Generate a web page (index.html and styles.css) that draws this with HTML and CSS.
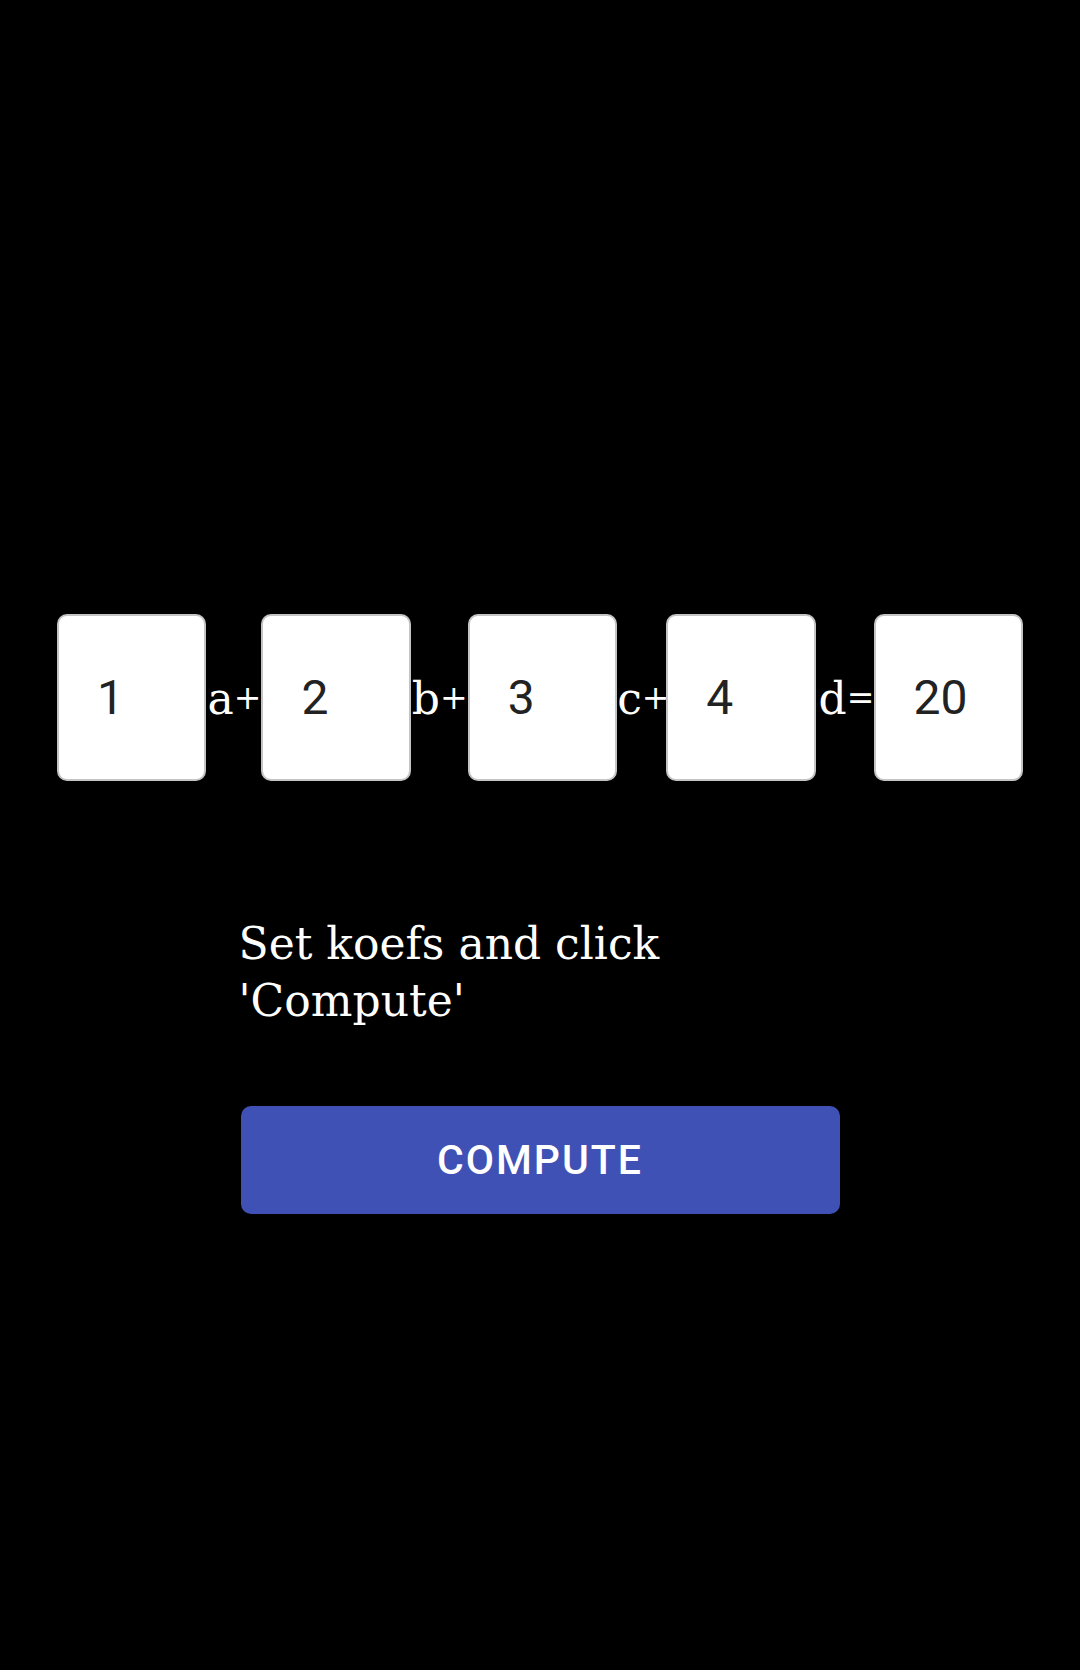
FILE: index.html
```html
<!DOCTYPE html>
<html>
<head>
<meta charset="utf-8">
<link rel="stylesheet" href="styles.css">
</head>
<body>
<main class="screen">
  <div class="equation">
    <div class="koef">1</div><span class="op op-a">a<span class="sign">+</span></span>
    <div class="koef">2</div><span class="op op-b">b<span class="sign">+</span></span>
    <div class="koef">3</div><span class="op op-c">c<span class="sign">+</span></span>
    <div class="koef">4</div><span class="op op-d">d<span class="sign">=</span></span>
    <div class="koef">20</div>
  </div>
  <div class="panel">
    <p class="hint">Set koefs and click 'Compute'</p>
    <button class="compute">COMPUTE</button>
  </div>
</main>
</body>
</html>
```

FILE: styles.css
```css
html, body {
  margin: 0;
  padding: 0;
  background: #000;
}

.screen {
  width: 1080px;
  height: 1670px;
  box-sizing: border-box;
  padding-top: 614px;
  display: flex;
  flex-direction: column;
  align-items: center;
}

.equation {
  display: flex;
  align-items: baseline;
  justify-content: center;
  width: 100%;
}

.koef {
  box-sizing: border-box;
  width: 149.4px;
  height: 167px;
  background: #fff;
  border: 2px solid #c4c4c4;
  border-radius: 10px;
  display: flex;
  align-items: center;
  padding-left: 38px;
  font-family: Roboto, "Liberation Sans", sans-serif;
  font-size: 48px;
  color: #222;
}

.op {
  box-sizing: border-box;
  display: block;
  font-family: "DejaVu Serif", "Liberation Serif", serif;
  font-size: 44px;
  color: #fff;
  white-space: nowrap;
  padding-left: 1px;
}

.sign {
  font-size: 33px;
  vertical-align: 5px;
}

.op-a { width: 55px; }
.op-b { width: 57px; }
.op-c { width: 49px; padding-left: 0; }
.op-d { width: 58px; padding-left: 3px; }

.panel {
  width: 599px;
  margin-top: 134px;
  display: flex;
  flex-direction: column;
}

.hint {
  margin: 0 0 0 -2px;
  width: 560px;
  font-family: "DejaVu Serif", "Liberation Serif", serif;
  font-size: 44px;
  line-height: 57px;
  color: #fff;
}

.compute {
  margin-top: 77px;
  width: 599px;
  height: 108px;
  border: none;
  border-radius: 10px;
  background: #3f51b5;
  color: #fff;
  font-family: Roboto, "Liberation Sans", sans-serif;
  font-weight: 500;
  font-size: 41px;
  letter-spacing: 2px;
  padding: 0;
}
```
